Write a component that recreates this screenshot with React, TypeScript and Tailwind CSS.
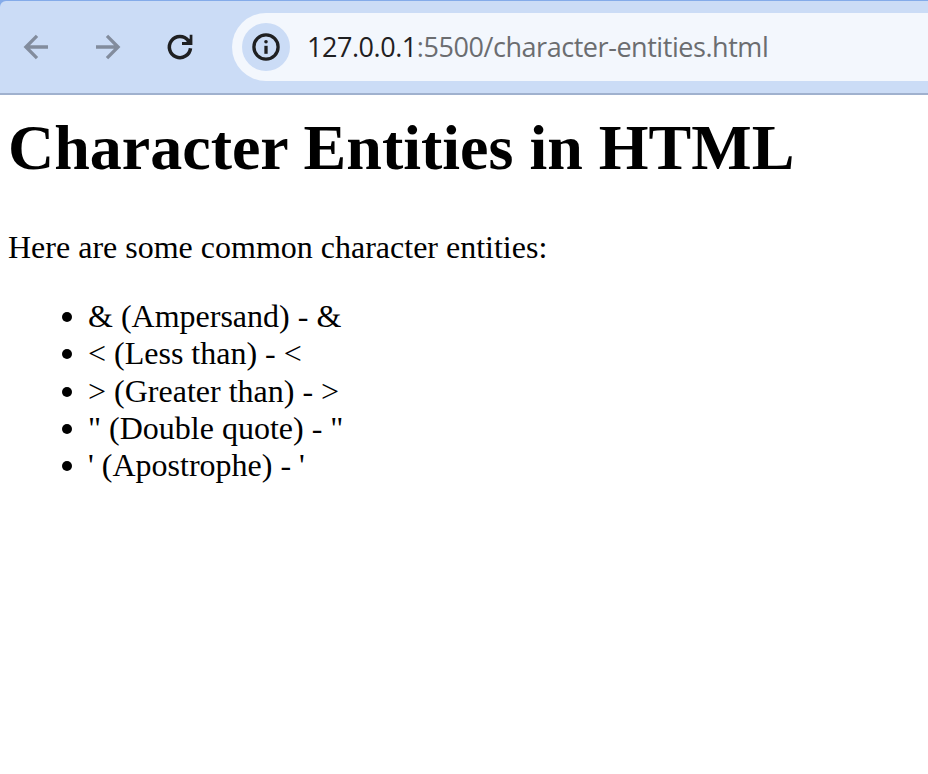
const items = [
  "& (Ampersand) - &",
  "< (Less than) - <",
  "> (Greater than) - >",
  '" (Double quote) - "',
  "' (Apostrophe) - '",
];

export default function App() {
  return (
    <div className="h-[774px] w-[928px] overflow-hidden bg-white font-['Liberation_Serif',serif] text-black">
      <div className="bg-[#84abe9] pt-px">
        <header className="flex h-[94px] items-center rounded-tl-[6px] border-b-2 border-b-[#a0b1ce] bg-[#cbdcf6]">
          <nav className="flex w-[232px] shrink-0 items-center pl-4">
            <svg className="size-10 shrink-0" viewBox="0 0 40 40" fill="none" stroke="#828c9d" strokeWidth="3.3"><path d="M32 20H10M21 8.9L9.9 20 21 31.1" /></svg>
            <svg className="ml-8 size-10 shrink-0" viewBox="0 0 40 40" fill="none" stroke="#828c9d" strokeWidth="3.3"><path d="M8 20h22M19 8.9L30.1 20 19 31.1" /></svg>
            <svg className="ml-8 size-10 shrink-0" viewBox="0 0 40 40" fill="none" stroke="#1f2022" strokeWidth="3.5"><path d="M30.5 21.2A10.6 10.6 0 1 1 28.3 13.5" /><path d="M29.7 7.7H32.4V18H22V15.1H26.1L29.7 11.5Z" fill="#1f2022" stroke="none" /></svg>
          </nav>
          <div className="flex h-[68px] flex-1 items-center rounded-l-full bg-[#f3f7fd] pl-[10px]">
            <div className="flex size-12 items-center justify-center rounded-full bg-[#cbdcf6]">
              <svg className="size-8" viewBox="0 0 32 32" fill="none" stroke="#1f2022" strokeWidth="3.3"><circle cx="16" cy="16" r="12.1" /><path d="M16 14.8v8" /><circle cx="16" cy="10.7" r="1.8" fill="#1f2022" stroke="none" /></svg>
            </div>
            <span className="ml-[17px] whitespace-nowrap font-['Open_Sans',sans-serif] text-[27px] tracking-[-0.45px] text-[#6b6d70]"><span className="text-[#1f2022]">127.0.0.1</span>:5500/character-entities.html</span>
          </div>
        </header>
      </div>
      <main className="px-2 pt-4">
        <h1 className="whitespace-nowrap text-[64px] leading-[74px] font-bold">Character Entities in HTML</h1>
        <p className="mt-11 text-[32px] leading-[37px]">Here are some common character entities:</p>
        <ul className="mt-8 pl-[54px] text-[32px] leading-[37.3px]">
          {items.map((item) => (
            <li key={item} className="flex">
              <span className="mt-3.5 mr-4 size-2.5 shrink-0 rounded-full bg-black" />
              <span>{item}</span>
            </li>
          ))}
        </ul>
      </main>
    </div>
  );
}
